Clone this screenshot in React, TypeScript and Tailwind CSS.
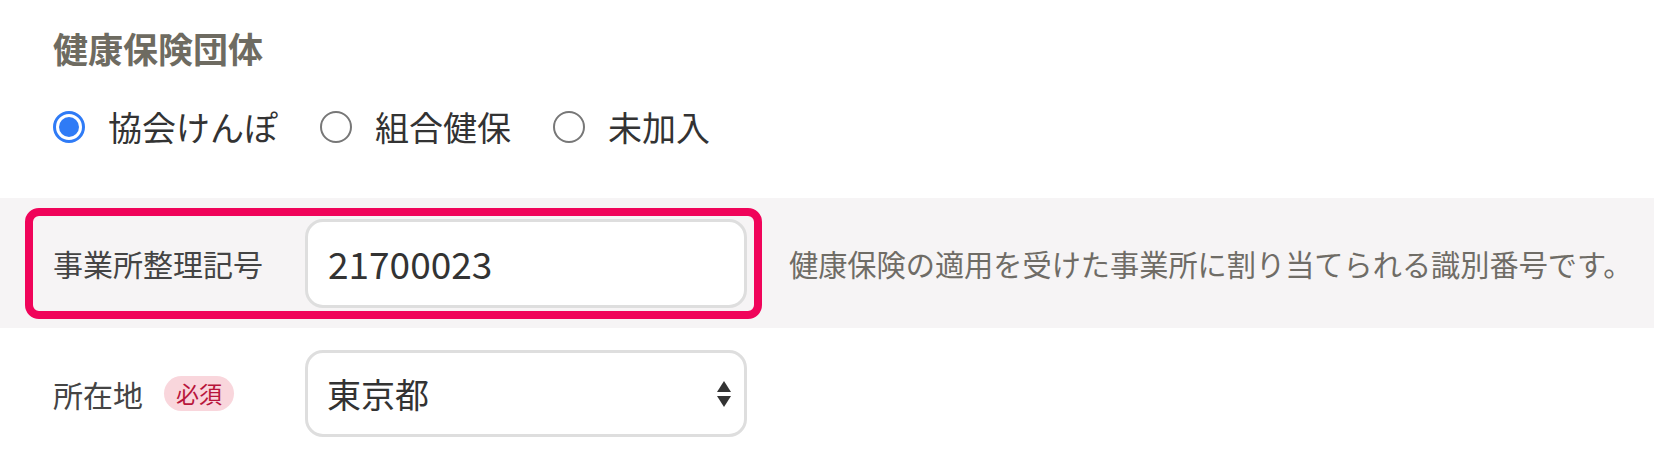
const options = [
  { id: 'kyokai', label: '協会けんぽ', checked: true },
  { id: 'kumiai', label: '組合健保', checked: false },
  { id: 'none', label: '未加入', checked: false },
]

function Radio({ checked }: { checked: boolean }) {
  if (checked) {
    return (
      <span className="flex items-center justify-center size-[32px] rounded-full border-[3px] border-[#2f7bf6] bg-white shrink-0">
        <span className="size-[20px] rounded-full bg-[#2f7bf6]" />
      </span>
    )
  }
  return <span className="size-[32px] rounded-full border-2 border-[#777] bg-white shrink-0" />
}

function SelectArrows() {
  return (
    <svg className="w-[14px] h-[26px]" viewBox="0 0 14 26" fill="#333">
      <path d="M7 0L14 11H0Z" />
      <path d="M0 15H14L7 26Z" />
    </svg>
  )
}

export default function App() {
  return (
    <div className="w-[1654px] h-[457px] bg-white overflow-hidden font-['Noto_Sans_CJK_JP',sans-serif]">
      {/* Insurance group */}
      <div className="pl-[53px] pt-[31px]">
        <h2 className="text-[35px] leading-[34px] font-bold text-[#6e6b61]">健康保険団体</h2>
        <div className="flex items-center mt-[45px] h-[34px]">
          {options.map((o) => (
            <label key={o.id} className="flex items-center gap-[23px] mr-[42px]">
              <Radio checked={o.checked} />
              <span className="text-[34px] leading-[34px] text-[#333]">{o.label}</span>
            </label>
          ))}
        </div>
      </div>

      {/* Highlighted row */}
      <div className="mt-[54px] h-[130px] bg-[#f6f4f5] flex items-center pl-[25px]">
        <div className="flex items-center w-[737px] h-[111px] border-[8px] border-[#f0045a] rounded-[14px] pl-[20px]">
          <span className="w-[252px] text-[30px] leading-[30px] text-[#444] shrink-0">事業所整理記号</span>
          <div className="flex items-center w-[442px] h-[89px] bg-white border-[3px] border-[#dedede] rounded-[18px] pl-[20px]">
            <span className="text-[37px] leading-[36px] text-[#333]">21700023</span>
          </div>
        </div>
        <p className="ml-[27px] text-[29.2px] leading-[30px] text-[#6f6c66] whitespace-nowrap">
          健康保険の適用を受けた事業所に割り当てられる識別番号です。
        </p>
      </div>

      {/* Location */}
      <div className="mt-[22px] flex items-center pl-[53px]">
        <div className="flex items-center w-[252px] shrink-0">
          <span className="text-[30px] leading-[30px] text-[#444]">所在地</span>
          <span className="ml-[21px] flex items-center justify-center w-[70px] h-[35px] rounded-full bg-[#f9d6dc] text-[23px] leading-[23px] text-[#b8153b]">
            必須
          </span>
        </div>
        <div className="flex items-center justify-between w-[442px] h-[87px] bg-white border-[3px] border-[#dedede] rounded-[18px] pl-[19px] pr-[13px]">
          <span className="text-[34px] leading-[34px] text-[#333]">東京都</span>
          <SelectArrows />
        </div>
      </div>
    </div>
  )
}
